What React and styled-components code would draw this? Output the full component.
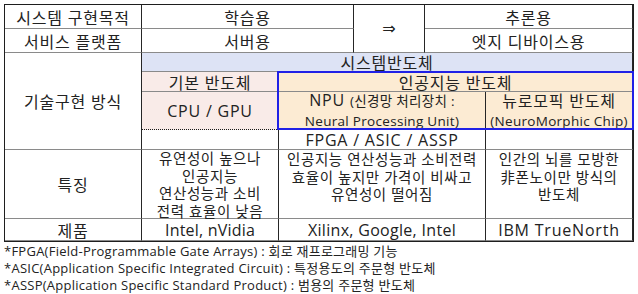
import React from 'react';
import styled, { createGlobalStyle } from 'styled-components';

const LAVENDER = '#dde3f5';
const PINK = '#f9ebe8';
const BEIGE = '#fcebd3';

const Global = createGlobalStyle`
  html, body { padding: 0; background: #fff; }
  body {
    margin: 4px;
    font-family: "Open Sans", "Noto Sans CJK KR", sans-serif;
    color: #222;
  }
`;

const Page = styled.div`
  display: flex;
  flex-direction: column;
`;

const Table = styled.div`
  display: grid;
  grid-template-columns: 137px 137px 75px 71px 61px 147px;
  grid-template-rows: 24px 24px 19px 20px 38px 20px 69px 22px;
  width: max-content;
  border: 1px solid #1e1e1e;
`;

const Cell = styled.div`
  grid-column: ${p => p.$col};
  grid-row: ${p => p.$row};
  display: flex;
  flex-direction: column;
  align-items: center;
  justify-content: ${p => (p.$top ? 'flex-start' : 'center')};
  padding-top: ${p => p.$pad || 0}px;
  background: ${p => p.$bg || '#fff'};
  border-right: 1px solid #262626;
  border-bottom: ${p => (p.$dotted ? '1px dotted #1a1a1a' : '1px solid #8a8a8a')};
  font-size: ${p => p.$size || 16}px;
  letter-spacing: ${p => (p.$ls != null ? p.$ls : 0.8)}px;
  line-height: normal;
  white-space: nowrap;
  text-align: center;
`;

const Line = styled.span`
  display: block;
  line-height: ${p => p.$lh || 17.5}px;
`;

const Small = styled.span`
  font-size: 13.5px;
  letter-spacing: 0.3px;
`;

const Big = styled.span`
  font-size: 16px;
`;

const Arrow = styled.span`
  font-family: "DejaVu Sans", sans-serif;
  font-size: 16px;
  letter-spacing: 0;
  line-height: 18px;
`;

const Frame = styled.div`
  grid-column: 3 / 7;
  grid-row: 4 / 6;
  margin: -1px -1px 0 -2px;
  border: 2px solid #2020e6;
  pointer-events: none;
`;

const Notes = styled.div`
  display: flex;
  flex-direction: column;
  font-size: 13px;
  letter-spacing: 0.25px;
  line-height: 17px;
  margin-top: 1px;
  color: #222;
`;

export default function App() {
  return (
    <Page>
      <Global />
      <Table>
        <Cell $col="1" $row="1">시스템 구현목적</Cell>
        <Cell $col="2 / 4" $row="1">학습용</Cell>
        <Cell $col="4" $row="1 / 3"><Arrow>⇒</Arrow></Cell>
        <Cell $col="5 / 7" $row="1">추론용</Cell>

        <Cell $col="1" $row="2">서비스 플랫폼</Cell>
        <Cell $col="2 / 4" $row="2">서버용</Cell>
        <Cell $col="5 / 7" $row="2">엣지 디바이스용</Cell>

        <Cell $col="1" $row="3 / 7">기술구현 방식</Cell>
        <Cell $col="2 / 7" $row="3" $bg={LAVENDER}>시스템반도체</Cell>
        <Cell $col="2" $row="4" $bg={PINK}>기본 반도체</Cell>
        <Cell $col="3 / 7" $row="4" $bg={BEIGE}>인공지능 반도체</Cell>
        <Cell $col="2" $row="5" $bg={PINK} $dotted>CPU / GPU</Cell>
        <Cell $col="3 / 6" $row="5" $bg={BEIGE}>
          <Line $lh={19}><Big>NPU</Big> <Small>(신경망 처리장치 :</Small></Line>
          <Line $lh={18}><Small>Neural Processing Unit)</Small></Line>
        </Cell>
        <Cell $col="6" $row="5" $bg={BEIGE}>
          <Line $lh={19}><Big>뉴로모픽 반도체</Big></Line>
          <Line $lh={18}><Small>(NeuroMorphic Chip)</Small></Line>
        </Cell>
        <Cell $col="2" $row="6" />
        <Cell $col="3 / 6" $row="6">FPGA / ASIC / ASSP</Cell>
        <Cell $col="6" $row="6" />

        <Cell $col="1" $row="7">특징</Cell>
        <Cell $col="2" $row="7" $top $size={14.5} $ls={0.6}>
          <Line>유연성이 높으나</Line>
          <Line>인공지능</Line>
          <Line>연산성능과 소비</Line>
          <Line>전력 효율이 낮음</Line>
        </Cell>
        <Cell $col="3 / 6" $row="7" $top $pad={1} $size={14.5} $ls={0.6}>
          <Line>인공지능 연산성능과 소비전력</Line>
          <Line>효율이 높지만 가격이 비싸고</Line>
          <Line>유연성이 떨어짐</Line>
        </Cell>
        <Cell $col="6" $row="7" $top $pad={1} $size={14.5} $ls={0.6}>
          <Line>인간의 뇌를 모방한</Line>
          <Line>非폰노이만 방식의</Line>
          <Line>반도체</Line>
        </Cell>

        <Cell $col="1" $row="8">제품</Cell>
        <Cell $col="2" $row="8" $ls={0.2}>Intel, nVidia</Cell>
        <Cell $col="3 / 6" $row="8" $ls={0.3}>Xilinx, Google, Intel</Cell>
        <Cell $col="6" $row="8">IBM TrueNorth</Cell>

        <Frame />
      </Table>
      <Notes>
        <span>*FPGA(Field-Programmable Gate Arrays) : 회로 재프로그래밍 기능</span>
        <span>*ASIC(Application Specific Integrated Circuit) : 특정용도의 주문형 반도체</span>
        <span>*ASSP(Application Specific Standard Product) : 범용의 주문형 반도체</span>
      </Notes>
    </Page>
  );
}
